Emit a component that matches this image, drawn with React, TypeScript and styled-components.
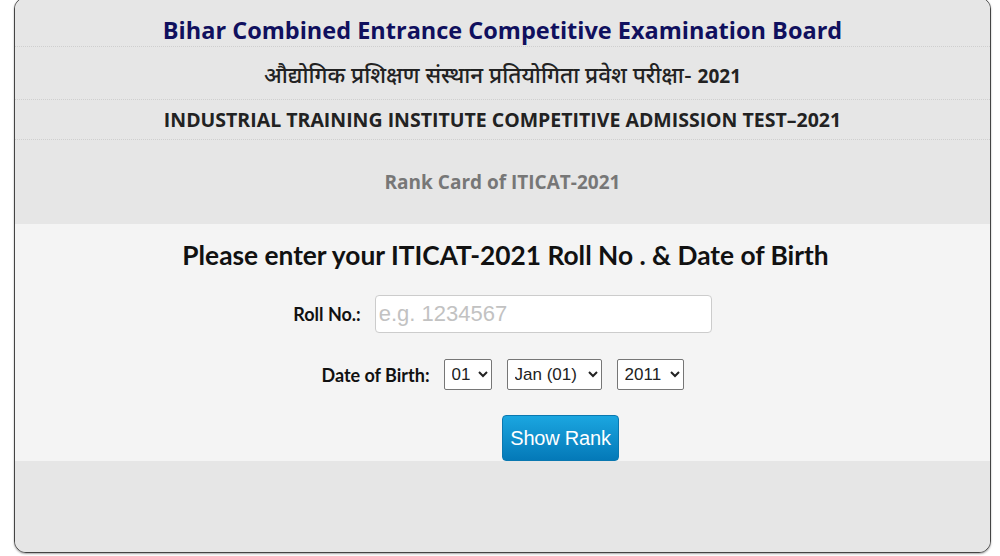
import styled, { createGlobalStyle } from "styled-components";

const GlobalStyle = createGlobalStyle`
    html, body {
        margin: 0;
        padding: 0;
        background: #ffffff;
        overflow: hidden;
    }
`;

const Page = styled.div`
    width: 1000px;
    height: 556px;
    padding: 0 9px 0 14px;
    box-sizing: border-box;
    overflow: hidden;
`;

const Panel = styled.div`
    margin-top: -3px;
    height: 556px;
    box-sizing: border-box;
    display: flex;
    flex-direction: column;
    background-color: #e6e6e6;
    border: 1.5px solid #444;
    border-radius: 12px;
    box-shadow: 0 1px 2px rgba(0, 0, 0, 0.35);
    overflow: hidden;
`;

const Header = styled.div`
    display: flex;
    flex-direction: column;
    background-color: #e6e6e6;
`;

interface IHeadRow {
    $h: number;
    $size: number;
    $color: string;
    $pad: number;
    $last?: boolean;
}

const HeadRow = styled.div<IHeadRow>`
    height: ${p => p.$h}px;
    box-sizing: border-box;
    display: flex;
    align-items: baseline;
    justify-content: center;
    padding-top: ${p => p.$pad}px;
    font-family: "Open Sans", "Noto Sans Devanagari", "Noto Sans", sans-serif;
    font-weight: 700;
    font-size: ${p => p.$size}px;
    color: ${p => p.$color};
    border-bottom: ${p => (p.$last ? "none" : "1px dotted #cfcfcf")};
    white-space: nowrap;
`;

const Hindi = styled.span`
    font-family: "Noto Sans Devanagari", "Noto Sans", sans-serif;
    font-weight: 500;
    font-size: 22.5px;
    color: #222;
`;

const FormSection = styled.div`
    background-color: #f4f4f4;
    display: flex;
    flex-direction: column;
    align-items: center;
    padding-top: 16px;
`;

const Heading = styled.h2`
    margin: 0 0 0 6px;
    font-family: Lato, "Open Sans", sans-serif;
    font-weight: 700;
    font-size: 26.3px;
    line-height: 30px;
    color: #111;
`;

const Row = styled.div<{ $gap: number; $top: number }>`
    display: flex;
    align-items: center;
    gap: ${p => p.$gap}px;
    margin-top: ${p => p.$top}px;
`;

const Label = styled.label`
    font-family: Lato, "Open Sans", sans-serif;
    font-weight: 700;
    font-size: 18px;
    color: #111;
`;

const TextInput = styled.input`
    width: 337px;
    height: 38px;
    box-sizing: border-box;
    padding: 0 3px;
    border: 1px solid #cccccc;
    border-radius: 4px;
    background: #fff;
    font-family: "Liberation Sans", Arial, sans-serif;
    font-size: 22px;
    color: #333;

    &::placeholder {
        color: #c2c2c2;
    }
`;

const Selects = styled.div`
    display: flex;
    gap: 15px;
`;

const Select = styled.select<{ $w: number }>`
    width: ${p => p.$w}px;
    height: 31px;
    box-sizing: border-box;
    padding: 0 3px;
    border: 1px solid #767676;
    border-radius: 2px;
    background: #fff;
    font-family: "Liberation Sans", Arial, sans-serif;
    font-size: 17px;
    color: #222;
`;

const Button = styled.button`
    margin: 25px 0 0 116px;
    width: 117px;
    height: 46px;
    border: 1px solid #0a78b0;
    border-radius: 4px;
    background: linear-gradient(to bottom, #1ba6e0, #0479b8);
    color: #fff;
    font-family: "Liberation Sans", Arial, sans-serif;
    font-size: 20px;
    letter-spacing: -0.2px;
    cursor: pointer;
`;

const Footer = styled.div`
    flex: 1;
    background-color: #e6e6e6;
`;

const days = Array.from({ length: 31 }, (_, i) => String(i + 1).padStart(2, "0"));
const months = ["Jan", "Feb", "Mar", "Apr", "May", "Jun", "Jul", "Aug", "Sep", "Oct", "Nov", "Dec"];
const years = Array.from({ length: 20 }, (_, i) => String(2011 - i));

const App = () => {
    return (
        <Page>
            <GlobalStyle />
            <Panel>
                <Header>
                    <HeadRow $h={49} $size={23.5} $color="#10105e" $pad={16}>
                        Bihar Combined Entrance Competitive Examination Board
                    </HeadRow>
                    <HeadRow $h={53} $size={19} $color="#222" $pad={16}>
                        <Hindi>औद्योगिक प्रशिक्षण संस्थान प्रतियोगिता प्रवेश परीक्षा-&nbsp;</Hindi>2021
                    </HeadRow>
                    <HeadRow $h={40} $size={19.5} $color="#222" $pad={6}>
                        INDUSTRIAL TRAINING INSTITUTE COMPETITIVE ADMISSION TEST–2021
                    </HeadRow>
                    <HeadRow $h={84} $size={19} $color="#777" $pad={29} $last>
                        Rank Card of ITICAT-2021
                    </HeadRow>
                </Header>
                <FormSection>
                    <Heading>Please enter your ITICAT-2021 Roll No . &amp; Date of Birth</Heading>
                    <Row $gap={14} $top={25}>
                        <Label htmlFor="roll">Roll No.:</Label>
                        <TextInput id="roll" type="text" placeholder="e.g. 1234567" />
                    </Row>
                    <Row $gap={14} $top={26}>
                        <Label>Date of Birth:</Label>
                        <Selects>
                            <Select $w={48} defaultValue="01">
                                {days.map(d => <option key={d}>{d}</option>)}
                            </Select>
                            <Select $w={95} defaultValue="Jan (01)">
                                {months.map((m, i) => (
                                    <option key={m}>{`${m} (${String(i + 1).padStart(2, "0")})`}</option>
                                ))}
                            </Select>
                            <Select $w={67} defaultValue="2011">
                                {years.map(y => <option key={y}>{y}</option>)}
                            </Select>
                        </Selects>
                    </Row>
                    <Button type="button">Show Rank</Button>
                </FormSection>
                <Footer />
            </Panel>
        </Page>
    );
}

export default App;
